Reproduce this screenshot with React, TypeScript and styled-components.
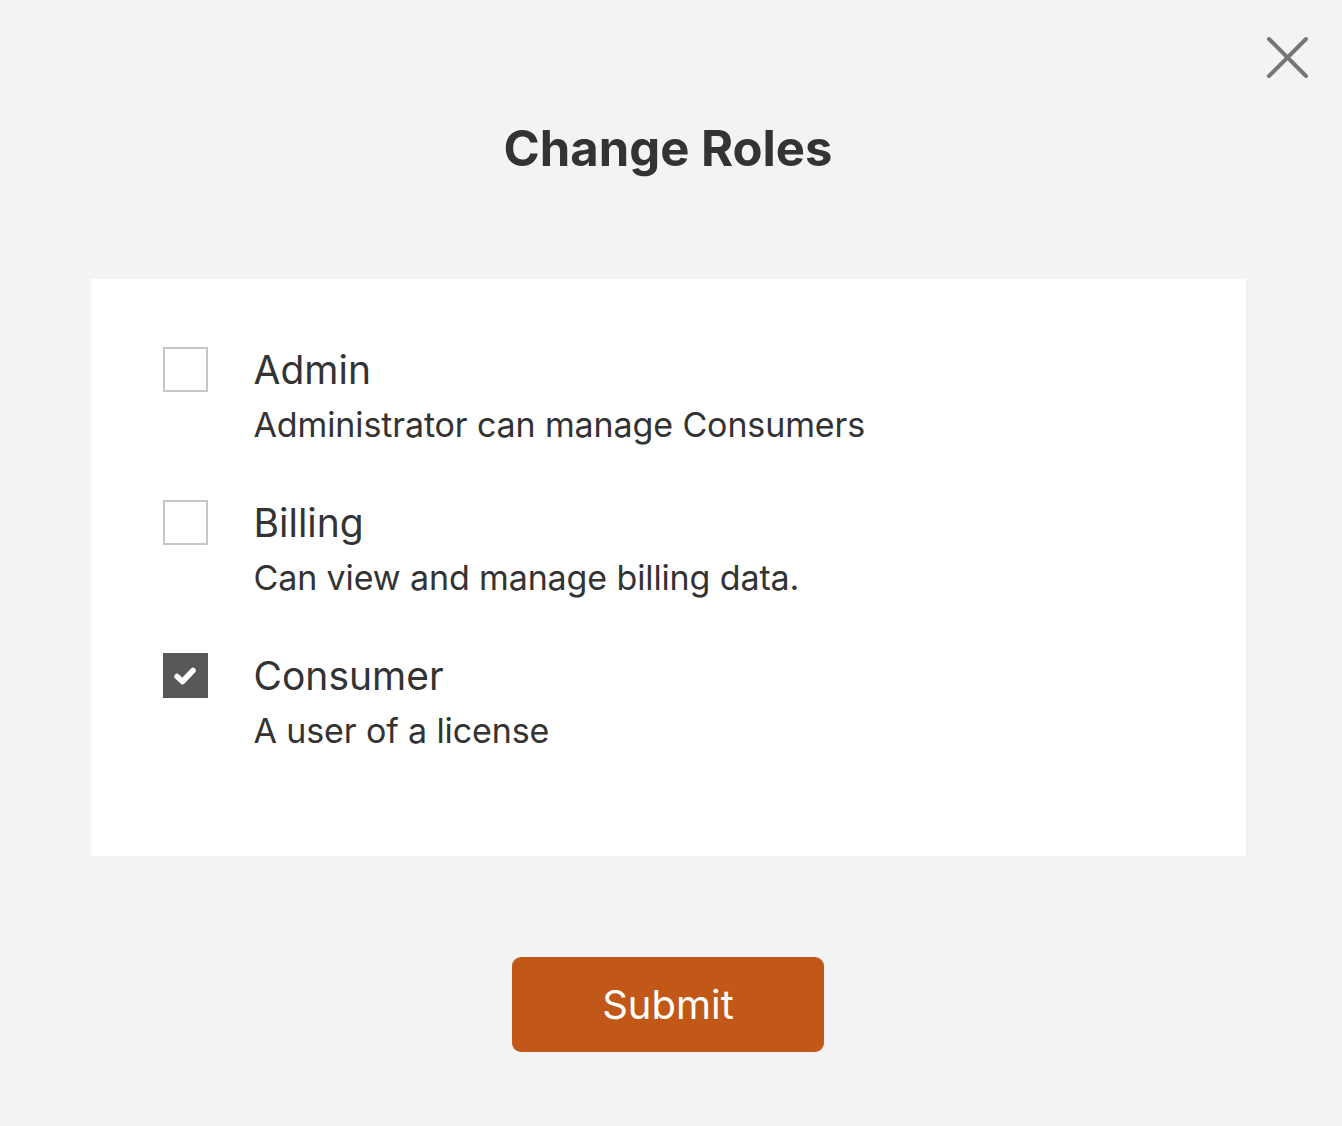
import React, { useState } from "react";
import styled, { createGlobalStyle } from "styled-components";

const GlobalStyle = createGlobalStyle`
  html, body {
    margin: 0;
    padding: 0;
    background: #f3f3f3;
  }
  body {
    font-family: Inter, "Noto Sans", sans-serif;
    color: #333;
  }
`;

const Page = styled.div`
  position: relative;
  width: 1336px;
  height: 1126px;
  background: #f3f3f3;
  box-sizing: border-box;
  padding-top: 116px;
  display: flex;
  flex-direction: column;
  align-items: center;
`;

const CloseButton = styled.button`
  position: absolute;
  top: 36px;
  right: 28px;
  width: 42px;
  height: 42px;
  padding: 0;
  border: none;
  background: none;
  cursor: pointer;
`;

const Title = styled.h1`
  margin: 0;
  font-size: 49px;
  font-weight: 700;
  line-height: 66px;
  color: #333;
`;

const Panel = styled.div`
  margin-top: 97px;
  width: 1155px;
  height: 577px;
  box-sizing: border-box;
  background: #fff;
  padding: 67px 72px;
  display: flex;
  flex-direction: column;
  gap: 51px;
`;

const RoleRow = styled.label`
  display: flex;
  align-items: flex-start;
  gap: 46px;
  cursor: pointer;
`;

const Box = styled.span<{ checked: boolean }>`
  flex: none;
  width: 45px;
  height: 45px;
  margin-top: 1px;
  box-sizing: border-box;
  border: ${({ checked }) => (checked ? "none" : "2px solid #c6c6c6")};
  background: ${({ checked }) => (checked ? "#58585a" : "#fff")};
  display: flex;
  align-items: center;
  justify-content: center;
`;

const RoleText = styled.div`
  display: flex;
  flex-direction: column;
`;

const RoleName = styled.span`
  font-size: 39px;
  line-height: 48px;
  color: #333;
`;

const RoleDesc = styled.span`
  margin-top: 8px;
  font-size: 34px;
  line-height: 46px;
  letter-spacing: -0.12px;
  color: #333;
`;

const SubmitButton = styled.button`
  margin-top: 101px;
  width: 312px;
  height: 95px;
  border: none;
  border-radius: 9px;
  background: #c25818;
  color: #fff;
  font-family: Inter, "Noto Sans", sans-serif;
  font-size: 40px;
  cursor: pointer;
`;

const roles = [
  { name: "Admin", desc: "Administrator can manage Consumers" },
  { name: "Billing", desc: "Can view and manage billing data." },
  { name: "Consumer", desc: "A user of a license" },
];

export default function App() {
  const [selected, setSelected] = useState<string[]>(["Consumer"]);

  const toggle = (name: string) => {
    setSelected((s) => (s.includes(name) ? s.filter((n) => n !== name) : [...s, name]));
  };

  return (
    <>
      <GlobalStyle />
      <Page>
        <CloseButton aria-label="Close">
          <svg width="42" height="42" viewBox="0 0 42 42">
            <path d="M3 3 L40 40 M40 3 L3 40" stroke="#767676" strokeWidth="4" strokeLinecap="round" />
          </svg>
        </CloseButton>
        <Title>Change Roles</Title>
        <Panel>
          {roles.map((r) => {
            const checked = selected.includes(r.name);
            return (
              <RoleRow key={r.name} onClick={() => toggle(r.name)}>
                <Box checked={checked}>
                  {checked && (
                    <svg width="22" height="18" viewBox="0 0 22 18">
                      <path d="M3 9.5 L8.5 14.5 L19 3.5" stroke="#fff" strokeWidth="5.5" fill="none" strokeLinecap="round" strokeLinejoin="round" />
                    </svg>
                  )}
                </Box>
                <RoleText>
                  <RoleName>{r.name}</RoleName>
                  <RoleDesc>{r.desc}</RoleDesc>
                </RoleText>
              </RoleRow>
            );
          })}
        </Panel>
        <SubmitButton>Submit</SubmitButton>
      </Page>
    </>
  );
}
